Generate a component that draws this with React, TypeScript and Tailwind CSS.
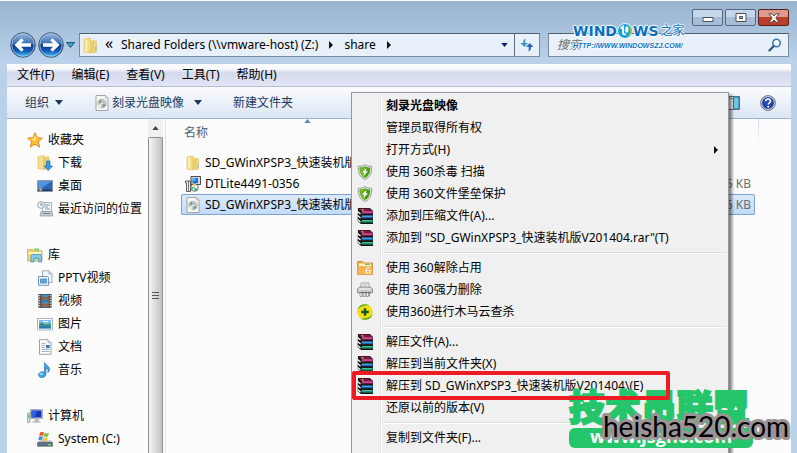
import type { ReactNode } from "react";

type IconProps = { className?: string };

const FolderIcon = ({ className = "size-4" }: IconProps) => (
  <svg viewBox="0 0 16 16" className={className}>
    <path d="M2 2l6-1v14l-6-1z" fill="#f3dc84" stroke="#dcb94f" strokeWidth=".6" />
    <path d="M3 2.5l2-.4v12l-2-.4z" fill="#fbf0b8" />
    <path d="M8 3h4v11l-4 1z" fill="#ecd072" />
    <path d="M11 3.5l2.6.5v10l-3.6.8z" fill="#f0d983" stroke="#d8b550" strokeWidth=".5" />
    <path d="M12.5 9h1v4h-1z" fill="#7db9dc" />
  </svg>
);

const DiscFileIcon = ({ className = "size-4" }: IconProps) => (
  <svg viewBox="0 0 16 16" className={className}>
    <path d="M2 .5h9.500L14 3v12.500H2z" fill="#f7f7f7" stroke="#9a9a9a" strokeWidth=".9" />
    <path d="M11.500.5V3H14" fill="#ddd" stroke="#9a9a9a" strokeWidth=".6" />
    <circle cx="8" cy="8.500" r="4.300" fill="#c3c6c7" stroke="#9a9fa1" strokeWidth=".5" />
    <path d="M8 8.500L4 7A4.200 4.200 0 0 1 7 4.400z" fill="#7fa28b" />
    <path d="M8 8.500l4 1.500A4.200 4.200 0 0 1 9 12.600z" fill="#7d9c89" />
    <path d="M8 8.500l-1.500 4A4.200 4.200 0 0 1 4 10z" fill="#f1f1f1" />
    <circle cx="8" cy="8.500" r="1.300" fill="#fff" stroke="#8f9496" strokeWidth=".5" />
  </svg>
);

const InstallerIcon = () => (
  <svg viewBox="0 0 16 16" className="size-4">
    <path d="M6 .5h9.500v8H6z" fill="#d7d7d7" stroke="#222" strokeWidth=".8" />
    <path d="M7.500 2H13v5H7.500z" fill="#1378d8" />
    <path d="M8 2.500h2.500v2H8z" fill="#72c9fa" />
    <path d="M.5 5h5v10.500h-4V7h-1z" fill="#eee" stroke="#222" strokeWidth=".7" />
    <path d="M3.500 5v10" stroke="#555" strokeWidth=".8" />
    <circle cx="9.500" cy="11.500" r="3.800" fill="#eee" stroke="#222" strokeWidth=".6" />
    <path d="M9.500 11.500L7 9h3z" fill="#f3d629" />
    <path d="M9.500 11.500l3 2-3 1.800z" fill="#1bb64b" />
    <path d="M9.500 11.500L6.500 14v-3z" fill="#1bb6c4" />
  </svg>
);

const StarIcon = () => (
  <svg viewBox="0 0 16 16" className="size-4">
    <path
      d="M8 .8l2.200 4.900 5.200.5-4 3.500 1.300 5.400L8 12.200l-4.700 2.900 1.300-5.400-4-3.500 5.200-.5z"
      fill="#fdc12f"
      stroke="#e8842a"
      strokeWidth="1"
      strokeLinejoin="round"
    />
    <path d="M8 3l1.400 3.600L8 9 4.500 7l2-.4z" fill="#ffe68a" />
  </svg>
);

const DownloadIcon = () => (
  <svg viewBox="0 0 16 16" className="size-4">
    <path d="M1 1.500l6-1v14l-6-1z" fill="#f5e08c" stroke="#d8b550" strokeWidth=".6" />
    <path d="M7 2h5v11l-5 1.500z" fill="#ecd072" stroke="#d8b550" strokeWidth=".5" />
    <path d="M9.500 6h3.500v5h2.500l-4.250 4.500L7 11h2.500z" fill="#3d9be6" stroke="#1b67b3" strokeWidth=".7" />
  </svg>
);

const DesktopIcon = () => (
  <svg viewBox="0 0 16 16" className="size-4">
    <path d="M.5 2.500h15v11H.5z" fill="#2c66b8" stroke="#8793a5" strokeWidth=".8" />
    <path d="M1 3h14L4 10.500 1 11z" fill="#5293da" />
    <path d="M1 11.500h14V13H1z" fill="#203a5d" />
    <circle cx="3.500" cy="11.300" r="1.600" fill="#f0803c" />
    <path d="M3.500 11.300h1.600a1.600 1.600 0 0 1-1.600 1.600z" fill="#7fd4ff" />
  </svg>
);

const RecentIcon = () => (
  <svg viewBox="0 0 16 16" className="size-4">
    <path d="M5.500 1.500h9v9h-9z" fill="#f4f8fb" stroke="#9a9fa5" strokeWidth=".8" />
    <path d="M8 4h5M8 6h3M8 8h5" stroke="#6aa0cc" strokeWidth="1" />
    <path d="M4 10.500h11l.8 4.500H3z" fill="#c9cdd1" stroke="#8b9197" strokeWidth=".7" />
    <path d="M6 12.500h7" stroke="#777" />
    <circle cx="4" cy="4" r="3.400" fill="#eef1f4" stroke="#8b9197" strokeWidth=".8" />
    <path d="M4 2v2.200h1.700" fill="none" stroke="#555" strokeWidth=".7" />
  </svg>
);

const LibraryIcon = () => (
  <svg viewBox="0 0 16 16" className="size-4">
    <path d="M.5 2.500h5l1 1.200h8.500V14H.5z" fill="#efd574" stroke="#c8a548" strokeWidth=".7" />
    <path d="M1.500 5h12.500v2H1.500z" fill="#fbf3c4" />
    <path d="M7 1.500h5v2H7z" fill="#82c878" />
    <path d="M4 15V9.500Q4 7.500 6 7.500h6.500q2 0 2 2V15h-2.800v-3.800H7V15z" fill="#7ecbee" stroke="#3c94c4" strokeWidth=".8" />
  </svg>
);

const PptvIcon = () => (
  <svg viewBox="0 0 16 16" className="size-4">
    <path d="M5.500.8H12l3 3v8.700H5.500z" fill="#eef4fa" stroke="#8297ad" strokeWidth=".8" />
    <path d="M12 .8v3h3" fill="#cfdeec" stroke="#8297ad" strokeWidth=".7" />
    <path d="M1.500 6.500h9l1 1v7.800h-10z" fill="#e3f1fb" stroke="#6f8ba6" strokeWidth=".9" />
    <path d="M3.500 9h6v4h-6z" fill="#5aa7e2" stroke="#2f78b4" strokeWidth=".6" />
  </svg>
);

const VideoIcon = () => (
  <svg viewBox="0 0 16 16" className="size-4">
    <path d="M1.500 1h13v14h-13z" fill="#3c3c3c" />
    <path d="M4 1.500h8v6.200H4z" fill="#3f94cf" />
    <path d="M4 8.300h8v6.200H4z" fill="#4b8fbd" />
    <path d="M4 2l4.500 3L12 3v4L8 6 4 7z" fill="#9a5a32" />
    <path d="M4 9l4 2.500 4-1.500v4l-4-1-4 1z" fill="#9a5a32" />
    <path d="M2.700 2v13M13.300 2v13" stroke="#fff" strokeWidth="1.100" strokeDasharray="1.200 1.300" />
  </svg>
);

const PictureIcon = () => (
  <svg viewBox="0 0 16 16" className="size-4">
    <path d="M.5 2.500h15v11.500H.5z" fill="#fff" stroke="#96a1ab" strokeWidth=".8" />
    <path d="M2 4h12v8.500H2z" fill="#79c3ee" />
    <path d="M2 8l3-1.500 3 2 6-1v2H2z" fill="#3f8c63" />
    <path d="M2 9.500h12v3H2z" fill="#2d7ea9" />
    <path d="M6 5.500h5" stroke="#fff" />
  </svg>
);

const DocumentIcon = () => (
  <svg viewBox="0 0 16 16" className="size-4">
    <path d="M2.500.7h8.500l3 3v11.600H2.500z" fill="#fff" stroke="#8c979f" strokeWidth=".9" />
    <path d="M11 .7v3h3" fill="#dbe5ec" stroke="#8c979f" strokeWidth=".7" />
    <path d="M4.500 4.500h4M4.500 6.500h3.500M4.500 8.500h3.500M4.500 10.500h8M4.500 12.500h8" stroke="#9aabb8" strokeWidth=".9" />
    <path d="M9 6h3.700v3.200H9z" fill="#3978c1" />
  </svg>
);

const MusicIcon = () => (
  <svg viewBox="0 0 16 16" className="size-4">
    <path
      d="M7.500.5c.7 2.500 5 3.200 5 6.500 0 1.700-.8 2.800-1.600 3.500.6-2.300-.3-3.700-1.900-4.400v6.200c0 1.800-1.700 3.200-4 3.200-2 0-3.500-1-3.500-2.600 0-2 2.200-3.400 4.500-3.100.6 0 1 .2 1.500.4z"
      fill="#39a5e2"
      stroke="#1c6ca8"
      strokeWidth=".6"
    />
    <ellipse cx="4.300" cy="12" rx="1.800" ry="1" fill="#a4def8" />
  </svg>
);

const ComputerIcon = () => (
  <svg viewBox="0 0 16 16" className="size-4">
    <path d="M.5 5h2.500v9.500H.5z" fill="#d5d8da" stroke="#858b90" strokeWidth=".6" />
    <path d="M1.200 7h1.200v3H1.200z" fill="#47c738" />
    <path d="M3.500 1.500h12v9h-12z" fill="#d9dee3" stroke="#8a9299" strokeWidth=".7" />
    <path d="M4.500 2.500h10v7h-10z" fill="#1534bb" />
    <path d="M4.500 2.500h6l-3 7h-3z" fill="#2e62e0" />
    <path d="M8 10.500h3.500l.5 3H7z" fill="#b4babf" />
    <path d="M5.500 13.500h8v1h-8z" fill="#9ca3a9" />
  </svg>
);

const DriveIcon = () => (
  <svg viewBox="0 0 16 16" className="size-4">
    <path d="M2.500 9.500h12l1.200 2.500H.5z" fill="#aeb7bf" />
    <path d="M.5 11.500h15v3.800H.5z" fill="#5f717f" stroke="#414f5b" strokeWidth=".5" />
    <path d="M11 13h3v1.200h-3z" fill="#63e25d" />
    <path d="M3 1.500q2-1.300 4 0L6.200 5Q4.500 4 2.200 5z" fill="#ef5c26" />
    <path d="M7.600 1.800q2 1.200 4.200 0L11 5.300q-2 1-4.200 0z" fill="#78c33e" />
    <path d="M2 5.700q2-1 4 0l-.8 3.500q-2-1-4 0z" fill="#3f92dd" />
    <path d="M6.600 6.100q2 1.200 4.200 0L10 9.500q-2 1.200-4.200 0z" fill="#fbc52e" />
  </svg>
);

const ShieldIcon = () => (
  <svg viewBox="0 0 16 16" className="size-4">
    <path
      d="M8 .6c2 1.400 4.300 1.800 6.700 1.700.3 6-1.200 10.800-6.700 13.200C2.500 13.100 1 8.300 1.300 2.300 3.700 2.400 6 2 8 .6z"
      fill="#e5e9e5"
      stroke="#8d958e"
      strokeWidth=".9"
    />
    <path d="M8 2.300c1.600 1 3.400 1.400 5.300 1.400.1 4.600-1.300 8.200-5.300 10.200-4-2-5.400-5.600-5.300-10.200 1.900 0 3.700-.4 5.300-1.400z" fill="#4c9c14" />
    <path d="M8 2.300v11.600c-4-2-5.400-5.600-5.300-10.200 1.900 0 3.700-.4 5.300-1.400z" fill="#71b82c" />
    <path d="M9.700 3.800L5 8.600h2.300L6.500 12 11 7.300H8.700z" fill="#fff" />
  </svg>
);

const RarIcon = () => (
  <svg viewBox="0 0 16 16" className="size-4">
    <path d="M1 0h12l3 3v13H4L.5 13z" fill="#151515" />
    <path d="M1.500.5h11L15 3H4z" fill="#7d1549" />
    <path d="M4.500 3.200H16v2.400H4.500z" fill="#b0246f" />
    <path d="M5 4h10" stroke="#e98bc4" strokeWidth=".7" />
    <path d="M4.500 7.500H16v2.700H4.500z" fill="#1b65b5" />
    <path d="M5 8.200h10" stroke="#76c4f5" strokeWidth=".8" />
    <path d="M4.500 12H16v2.600H4.500z" fill="#168562" />
    <path d="M5 12.700h10" stroke="#5ee0ae" strokeWidth=".8" />
    <path d="M.5 3.500l3 2.500M.5 7.500l3 2.500M.5 11.500l3 2.500" stroke="#fff" strokeWidth="1.300" />
    <path d="M4 1.300h2l1 1.300H5.200z" fill="#e6cf2c" />
  </svg>
);

const UnlockFolderIcon = () => (
  <svg viewBox="0 0 16 16" className="size-4">
    <path d="M.6 1.500h5l1 1.500h8.800v11.500H.6z" fill="#e9ad49" stroke="#c98426" strokeWidth=".8" />
    <path d="M2 3.500h12v3H2z" fill="#fff2c9" />
    <path d="M8 3.500h5v1.500H8z" fill="#84ba4e" />
    <path d="M.8 6h14.500v8.500H.8z" fill="#f3b554" />
    <path d="M9.500 10V8.600a1.600 1.600 0 0 1 3 0" fill="none" stroke="#fff" strokeWidth="1" />
    <path d="M8.500 10h5v3.500h-5z" fill="#fff3d4" />
    <path d="M10.300 11h1.400v1.500h-1.400z" fill="#d98b28" />
  </svg>
);

const ShredderIcon = () => (
  <svg viewBox="0 0 16 16" className="size-4">
    <path d="M4 1h8v5H4z" fill="#fafafa" stroke="#929292" strokeWidth=".8" />
    <path d="M5.500 3h5" stroke="#9ab77c" strokeWidth=".9" />
    <path d="M2.500 5h11l2 2v3.800H.5V7z" fill="#c9cbcc" stroke="#7e8183" strokeWidth=".8" />
    <path d="M2 7h12" stroke="#f8f8f8" />
    <path d="M2.500 10h11v1.500h-11z" fill="#717171" />
    <path d="M3 11v3.500h2V11m1.200 0v3.500h2V11m1.200 0v3.500h2V11m1 0v3h1" fill="#fff" stroke="#777" strokeWidth=".7" />
  </svg>
);

const Ball360Icon = () => (
  <svg viewBox="0 0 16 16" className="size-4">
    <circle cx="8" cy="8" r="7.800" fill="#f6dd1b" />
    <path
      d="M.4 6A7.800 7.800 0 0 1 12 1.300C7 1.500 3 2.500.4 6zM15.600 10A7.800 7.800 0 0 1 4 14.700c5-.2 9-1.200 11.600-4.700z"
      fill="#4fae2a"
    />
    <path d="M8 4.200v7.600M4.200 8h7.600" stroke="#0c5a1b" strokeWidth="2.400" />
  </svg>
);

const Arrow = ({ className }: IconProps) => (
  <svg viewBox="0 0 8 5" className={className}>
    <path d="M0 0h8L4 5z" fill="currentColor" />
  </svg>
);

const RightArrow = () => (
  <svg viewBox="0 0 4 8" className="h-2 w-1 shrink-0">
    <path d="M0 0l4 4-4 4z" fill="#111" />
  </svg>
);

const NavBall = ({ label, forward }: { label: string; forward?: boolean }) => (
  <button aria-label={label}>
    <svg viewBox="0 0 26 26" className="size-[26px]">
      <defs>
        <linearGradient id="ball" x2="0" y2="1">
          <stop offset="0" stopColor="#9dbbe2" />
          <stop offset=".45" stopColor="#3a6db5" />
          <stop offset=".5" stopColor="#0c3a8c" />
          <stop offset=".75" stopColor="#155cb9" />
          <stop offset="1" stopColor="#4fd3fa" />
        </linearGradient>
      </defs>
      <circle cx="13" cy="13" r="12.300" fill="url(#ball)" stroke="#46566f" strokeWidth="1" />
      <circle cx="13" cy="13" r="11.200" fill="none" stroke="#a9c8ea" strokeWidth=".8" />
      <path
        d={
          forward
            ? "M21.500 13l-7-6.800-2.200 2.200 2.700 2.800H5v3.600h10l-2.700 2.800 2.200 2.200z"
            : "M4.500 13l7-6.800 2.200 2.200-2.700 2.800h10v3.600H11l2.700 2.800-2.200 2.200z"
        }
        fill="#fff"
      />
    </svg>
  </button>
);

type TreeItem = { label: string; icon: ReactNode };
type TreeGroup = TreeItem & { items: TreeItem[] };

const tree: TreeGroup[] = [
  {
    label: "收藏夹",
    icon: <StarIcon />,
    items: [
      { label: "下载", icon: <DownloadIcon /> },
      { label: "桌面", icon: <DesktopIcon /> },
      { label: "最近访问的位置", icon: <RecentIcon /> },
    ],
  },
  {
    label: "库",
    icon: <LibraryIcon />,
    items: [
      { label: "PPTV视频", icon: <PptvIcon /> },
      { label: "视频", icon: <VideoIcon /> },
      { label: "图片", icon: <PictureIcon /> },
      { label: "文档", icon: <DocumentIcon /> },
      { label: "音乐", icon: <MusicIcon /> },
    ],
  },
  {
    label: "计算机",
    icon: <ComputerIcon />,
    items: [{ label: "System (C:)", icon: <DriveIcon /> }],
  },
];

const files = [
  { name: "SD_GWinXPSP3_快速装机版", icon: <FolderIcon />, size: "" },
  { name: "DTLite4491-0356", icon: <InstallerIcon />, size: "5 KB" },
  { name: "SD_GWinXPSP3_快速装机版", icon: <DiscFileIcon />, size: "6 KB", selected: true },
];

type MenuEntry = { label: string; icon?: ReactNode; bold?: boolean; sub?: boolean; marked?: boolean };

const menuGroups: MenuEntry[][] = [
  [
    { label: "刻录光盘映像", bold: true },
    { label: "管理员取得所有权" },
    { label: "打开方式(H)", sub: true },
    { label: "使用 360杀毒 扫描", icon: <ShieldIcon /> },
    { label: "使用 360文件堡垒保护", icon: <ShieldIcon /> },
    { label: "添加到压缩文件(A)...", icon: <RarIcon /> },
    { label: '添加到 "SD_GWinXPSP3_快速装机版V201404.rar"(T)', icon: <RarIcon /> },
  ],
  [
    { label: "使用 360解除占用", icon: <UnlockFolderIcon /> },
    { label: "使用 360强力删除", icon: <ShredderIcon /> },
    { label: "使用360进行木马云查杀", icon: <Ball360Icon /> },
  ],
  [
    { label: "解压文件(A)...", icon: <RarIcon /> },
    { label: "解压到当前文件夹(X)", icon: <RarIcon /> },
    { label: "解压到 SD_GWinXPSP3_快速装机版V201404\\(E)", icon: <RarIcon />, marked: true },
    { label: "还原以前的版本(V)" },
  ],
  [{ label: "复制到文件夹(F)..." }],
];

const TitleBar = () => (
  <header className="flex h-8 shrink-0 items-start justify-end gap-0.5 pt-2 pr-2">
    <button
      aria-label="最小化"
      className="flex h-[17px] w-[31px] items-center justify-center rounded-xs border border-[#56677d] bg-linear-to-b from-[#c4d6ea] from-50% to-[#a5bdd7] to-50%"
    >
      <svg viewBox="0 0 12 5" className="mt-1 h-[5px] w-3">
        <path d="M1 .5h10v4H1z" fill="#fff" stroke="#4b5057" />
      </svg>
    </button>
    <button
      aria-label="最大化"
      className="flex h-[17px] w-[31px] items-center justify-center rounded-xs border border-[#56677d] bg-linear-to-b from-[#c4d6ea] from-50% to-[#a5bdd7] to-50%"
    >
      <svg viewBox="0 0 12 10" className="h-2.5 w-3">
        <path d="M1 .5h10v8H1z" fill="#fff" stroke="#4b5057" />
        <path d="M4.500 3.500h3v2h-3z" fill="#9db8d6" stroke="#4b5057" />
      </svg>
    </button>
    <button
      aria-label="关闭"
      className="flex h-[17px] w-[31px] items-center justify-center rounded-xs border border-[#5c1d1b] bg-linear-to-b from-[#dd9a8e] from-45% to-[#b93f2b] to-50%"
    >
      <svg viewBox="0 0 12 10" className="h-2.5 w-3">
        <path d="M1 .8h3L6 3 8 .8h3L7.800 5 11 9.200H8L6 7 4 9.200H1L4.200 5z" fill="#fff" stroke="#50333a" strokeWidth=".9" />
      </svg>
    </button>
  </header>
);

const NavBar = () => (
  <nav className="flex h-[31px] shrink-0 items-start gap-1 pr-2 pl-2.5">
    <div className="flex h-6 shrink-0 items-center gap-0.5 text-[#147ba8]">
      <NavBall label="后退" />
      <NavBall label="前进" forward />
      <button aria-label="最近的页面">
        <svg viewBox="0 0 9 6" className="h-1.5 w-[9px]">
          <path d="M.5.500h8L4.500 5.500z" fill="#3ba3cf" stroke="#1b4368" strokeWidth=".9" />
        </svg>
      </button>
    </div>
    <div className="flex h-6 min-w-0 flex-1 border border-[#7d8a9b] border-t-[#4e5b70] bg-[#e8f0f9]">
      <div className="flex min-w-0 flex-1 items-center pl-0.5">
        <FolderIcon className="size-[17px] shrink-0" />
        <span className="ml-1.5 w-4 pb-1 text-base leading-4">«</span>
        <span className="whitespace-nowrap">Shared Folders (\\vmware-host) (Z:)</span>
        <span className="px-[11px]">
          <RightArrow />
        </span>
        <span>share</span>
        <span className="px-[11px]">
          <RightArrow />
        </span>
      </div>
      <button aria-label="以前的位置" className="w-5 text-[#0c1a6b]">
        <Arrow className="mx-auto h-1 w-[7px]" />
      </button>
      <button aria-label="刷新" className="flex w-[25px] items-center justify-center border-l border-[#5f6b7e]">
        <svg viewBox="0 0 14 14" className="size-3.5">
          <path d="M5.500.5C3.500 1.500 3 3 3 5H.5l3.700 4L8 5H5.200c0-1.600.1-2.600.3-4.500z" fill="#3f95cf" />
          <path d="M8.500 13.500c2-1 2.500-2.500 2.500-4.500h2.500L9.800 5 6 9h2.800c0 1.600-.1 2.600-.3 4.500z" fill="#2c66b8" />
        </svg>
      </button>
    </div>
    <label className="ml-1 flex h-6 w-[241px] items-center border border-[#7d8a9b] border-t-[#4e5b70] bg-[#e8f0f9] px-1.5">
      <input
        type="text"
        aria-label="搜索"
        placeholder="搜索"
        className="min-w-0 flex-1 pl-0.5 italic outline-none placeholder:text-[#6d6d6d]"
      />
      <svg viewBox="0 0 14 14" className="size-3.5">
        <circle cx="8.500" cy="5" r="3.700" fill="#f4fbff" stroke="#3a78b5" strokeWidth="1.600" />
        <path d="M5.700 8L1.500 12.500" stroke="#34567f" strokeWidth="2.200" strokeLinecap="round" />
      </svg>
    </label>
  </nav>
);

const MenuBar = () => (
  <div className="flex h-[23px] shrink-0 items-center gap-[17px] border-b border-[#b6bfd6] bg-linear-to-b from-[#fbfcfe] from-20% via-[#d5daec] via-40% to-[#e2e6f5] px-2.5">
    {["文件(F)", "编辑(E)", "查看(V)", "工具(T)", "帮助(H)"].map((item) => (
      <button key={item} className="whitespace-nowrap">
        {item}
      </button>
    ))}
  </div>
);

const Toolbar = () => (
  <div className="flex h-8 shrink-0 items-center border-b border-[#9fb1cf] bg-linear-to-b from-[#fafcff] to-[#dbe6f4] px-[18px] text-[#1e395b]">
    <button className="flex items-center gap-1.5 whitespace-nowrap">
      组织
      <Arrow className="h-[5px] w-2" />
    </button>
    <button className="ml-[31px] flex items-center gap-0.5 whitespace-nowrap">
      <DiscFileIcon />
      刻录光盘映像
      <Arrow className="ml-2 h-[5px] w-2" />
    </button>
    <button className="ml-[31px] whitespace-nowrap">新建文件夹</button>
    <button aria-label="预览窗格" className="ml-auto">
      <svg viewBox="0 0 22 14" className="h-3.5 w-[22px]">
        <path d="M.5.5h21v13H.5z" fill="#f4f7fa" stroke="#5d7289" />
        <path d="M15.500 1h5.500v12h-5.500z" fill="#6ec6e4" stroke="#31768f" />
        <path d="M1 2.500h14" stroke="#9db1c3" />
      </svg>
    </button>
    <button aria-label="帮助" className="ml-5 -mr-[3px]">
      <svg viewBox="0 0 16 16" className="size-4">
        <circle cx="8" cy="8" r="7.400" fill="#d6dae2" stroke="#68707e" strokeWidth="1" />
        <circle cx="8" cy="8" r="6" fill="#2446a8" />
        <path d="M5.700 6.300c0-3.100 4.800-3 4.800-.2 0 1.700-2.200 1.800-2.200 3.400" fill="none" stroke="#fff" strokeWidth="1.600" />
        <circle cx="8.200" cy="11.800" r="1" fill="#fff" />
      </svg>
    </button>
  </div>
);

const Sidebar = () => (
  <aside className="flex w-[159px] shrink-0 border-r border-[#d9e5f4]">
    <div className="flex min-w-0 flex-1 flex-col gap-[23px] pt-[9px] pl-5">
      {tree.map((group) => (
        <section key={group.label}>
          <div className="flex h-[23px] items-center gap-[5px]">
            {group.icon}
            {group.label}
          </div>
          <ul className="pl-2.5">
            {group.items.map((item) => (
              <li key={item.label} className="flex h-[23px] items-center gap-[5px] whitespace-nowrap">
                {item.icon}
                {item.label}
              </li>
            ))}
          </ul>
        </section>
      ))}
    </div>
    <div className="mr-0.5 flex w-[15px] flex-col bg-[#f0f0f0]">
      <div className="flex h-[18px] items-center justify-center text-[#444]">
        <Arrow className="h-1 w-[7px] rotate-180" />
      </div>
      <div className="flex flex-1 items-center justify-center rounded-t-xs border border-b-0 border-[#8f8f8f] bg-linear-to-r from-[#f5f5f5] via-[#dcdcdc] to-[#c2c2c4]">
        <svg viewBox="0 0 7 8" className="h-2 w-[7px]">
          <path d="M0 .5h7M0 3.500h7M0 6.500h7" stroke="#555" />
        </svg>
      </div>
    </div>
  </aside>
);

const FileList = () => (
  <main className="min-w-0 flex-1 pr-9 pl-[15px]">
    <div className="flex h-[33px] justify-end">
      <div className="flex min-w-0 flex-1 flex-col gap-0.5 pl-[3px] text-[#4c607a]">
        <Arrow className="ml-[120px] h-1 w-[7px] shrink-0 rotate-180 text-[#5d8aae]" />
        <span>名称</span>
      </div>
      <div className="-mr-1 h-6 w-px bg-linear-to-b from-[#c5d7ea] to-[#fcfcfc]" />
    </div>
    <table className="w-full border-separate border-spacing-0">
      <tbody>
        {files.map((file, i) => (
          <tr
            key={i}
            className={
              file.selected
                ? "rounded-xs bg-linear-to-b from-[#dcebfc] to-[#c1dbfc] outline outline-[#7da2ce] -outline-offset-1"
                : ""
            }
          >
            <td className="h-[21px] p-0 pl-1">
              <div className="flex items-center gap-1 whitespace-nowrap">
                {file.icon}
                {file.name}
              </div>
            </td>
            <td className="h-[21px] p-0 pr-1 text-right text-[#6d6d6d]">{file.size}</td>
          </tr>
        ))}
      </tbody>
    </table>
  </main>
);

const ContextMenu = () => (
  <div
    role="menu"
    className="absolute top-[91px] -bottom-4 left-[351px] flex w-[378px] flex-col border border-[#979797] bg-[#f0f0f0] pt-0.5 shadow-[3px_3px_3px_rgba(0,0,0,0.5)]"
  >
    {menuGroups.map((group, g) => (
      <div key={g}>
        {g > 0 && (
          <div className="flex h-2">
            <div className="w-[30px] border-r border-white shadow-[inset_-1px_0_0_#e2e3e3]" />
            <div className="mt-[3px] mr-0.5 h-0.5 flex-1 border-t border-b border-t-[#dcdcdc] border-b-white" />
          </div>
        )}
        {group.map((item) => (
          <button key={item.label} role="menuitem" className="relative flex h-[22px] w-full text-left whitespace-nowrap">
            <span className="flex h-full w-[30px] items-center border-r border-white pl-[5px] shadow-[inset_-1px_0_0_#e2e3e3]">
              {item.icon}
            </span>
            <span className={item.bold ? "flex-1 pl-1 leading-[22px] font-bold" : "flex-1 pl-1 leading-[22px]"}>
              {item.label}
            </span>
            {item.sub && (
              <span className="self-center pr-2.5">
                <RightArrow />
              </span>
            )}
            {item.marked && (
              <span className="absolute -top-1 left-0 z-10 h-[29px] w-[318px] rounded-xs border-4 border-[#ed1c24]" />
            )}
          </button>
        ))}
      </div>
    ))}
    <div className="w-[30px] flex-1 border-r border-white shadow-[inset_-1px_0_0_#e2e3e3]" />
  </div>
);

const SiteLogo = () => (
  <div className="absolute top-[21px] left-[573px] font-['DejaVu_Sans','Noto_Sans_CJK_SC',sans-serif] font-bold text-[#0b6fc0] [text-shadow:1px_0_1px_#fff,-1px_0_1px_#fff,0_1px_1px_#fff,0_-1px_1px_#fff]">
    <div className="flex h-[18px] items-center text-sm">
      WIND
      <svg viewBox="0 0 16 16" className="size-4">
        <circle cx="8" cy="8" r="7.700" fill="#fff" />
        <circle cx="8" cy="8" r="7" fill="#1aa0d8" />
        <path d="M11 1.700A7 7 0 0 1 10 14.700C14 11 14 5 11 1.700z" fill="#8ccf3f" />
        <path d="M3.500 5.500l2.500-2v6.500q0 2 3 1.200" fill="none" stroke="#fff" strokeWidth="1.800" />
        <ellipse cx="9.800" cy="6.500" rx="1.600" ry="3.200" fill="#fff" />
      </svg>
      WS
      <span className="pl-0.5 text-xs font-normal">之家</span>
    </div>
    <div className="font-['Liberation_Sans',sans-serif] text-[7px] leading-3 italic">HTTP://WWW.WINDOWSZJ.COM/</div>
  </div>
);

const Watermark = () => (
  <div className="absolute top-[382px] left-[569px] w-[184px] font-['Noto_Sans_CJK_SC',sans-serif]">
    <div className="text-4xl leading-[45px] font-black whitespace-nowrap text-[#25c56b] [-webkit-text-stroke:2px_#25c56b]">
      技术员联盟
    </div>
    <div className="h-5 rounded-md bg-[#25c56b] text-center font-['Open_Sans',sans-serif] text-lg leading-4 font-bold text-white">
      www.jsgho.com
    </div>
    <svg viewBox="0 0 196 44" className="absolute top-5 left-[30px] h-11 w-[196px]">
      <text
        x="4"
        y="34"
        fontSize="28"
        fontFamily="Lato, 'Liberation Sans', sans-serif"
        fill="#000"
        stroke="#9c9494"
        strokeWidth="6"
        strokeLinejoin="round"
        paintOrder="stroke"
      >
        heisha520.com
      </text>
    </svg>
  </div>
);

export default function App() {
  return (
    <div className="relative flex h-screen flex-col overflow-hidden border-t border-white bg-[#bad1ea] bg-linear-to-b from-[#98b4d0] to-[#bad1ea] to-[60px] font-['Noto_Sans','Noto_Sans_CJK_SC',sans-serif] text-xs text-black">
      <TitleBar />
      <NavBar />
      <div className="mr-1.5 ml-[7px] flex min-h-0 flex-1 flex-col bg-[#fcfcfc]">
        <MenuBar />
        <Toolbar />
        <div className="flex min-h-0 flex-1">
          <Sidebar />
          <FileList />
        </div>
      </div>
      <ContextMenu />
      <SiteLogo />
      <Watermark />
    </div>
  );
}
